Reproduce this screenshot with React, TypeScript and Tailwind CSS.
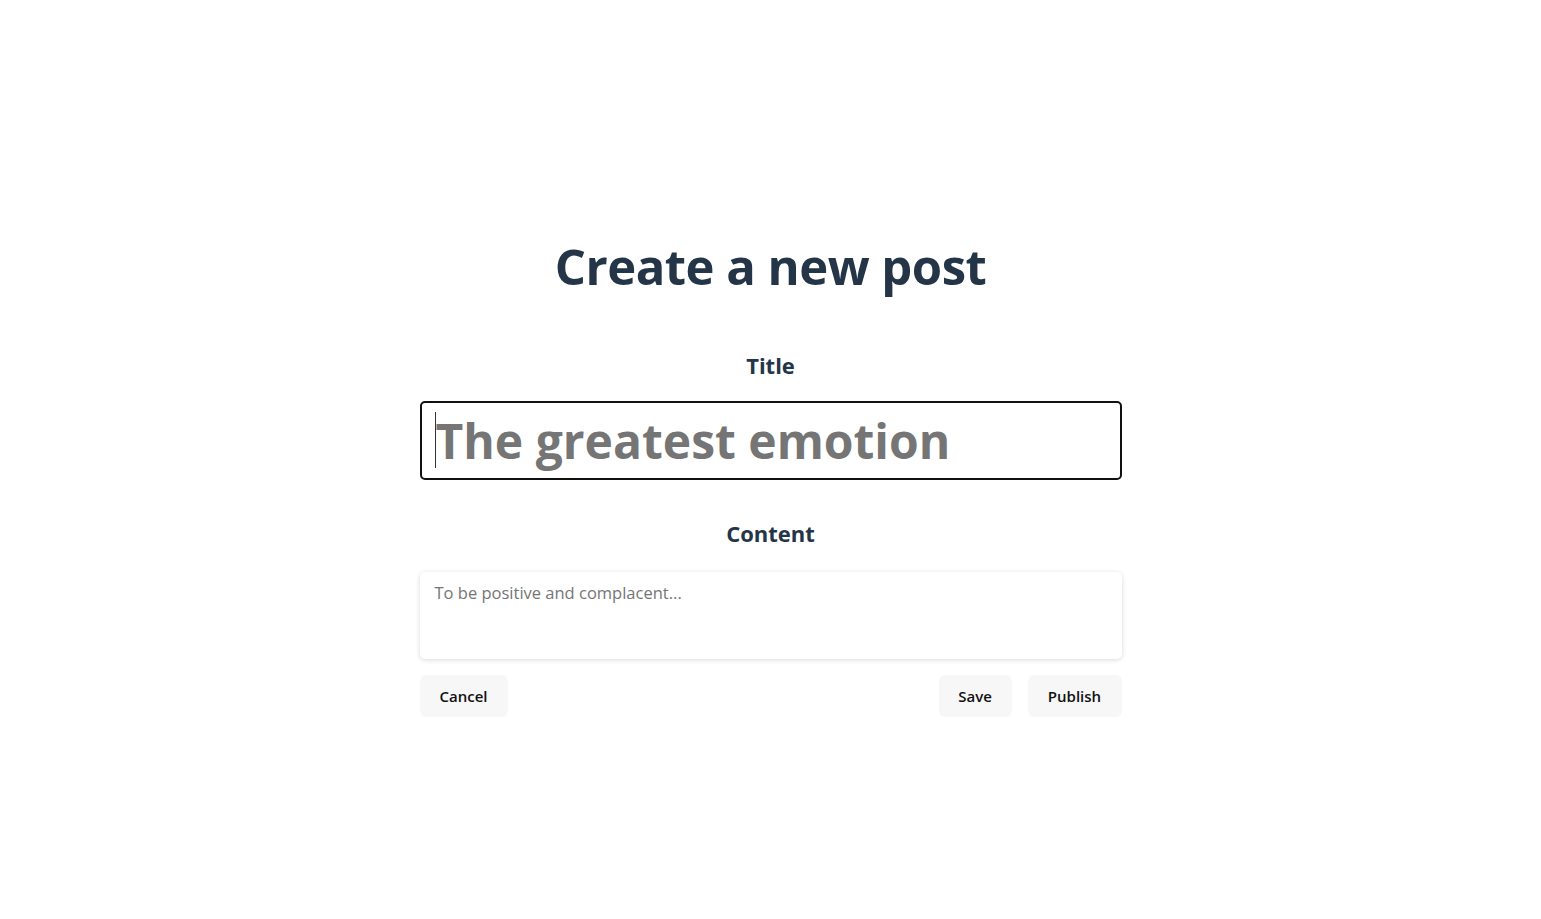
import { useState } from 'react';

const font = { fontFamily: '"Open Sans", "Noto Sans", sans-serif' };

export default function App() {
  const [title, setTitle] = useState('');
  const [content, setContent] = useState('');

  return (
    <div className="min-h-screen bg-white flex justify-center" style={font}>
      <div className="w-[702px] pt-[230px] flex flex-col">
        <h1 className="text-center text-[49px] leading-[72px] font-bold text-[#233547] tracking-[-0.5px]">
          Create a new post
        </h1>

        <label htmlFor="title" className="mt-[48px] text-center text-[22px] leading-[30px] font-bold text-[#233547]">
          Title
        </label>
        <div className="relative mt-[21px]">
          <input
            id="title"
            value={title}
            onChange={(e) => setTitle(e.target.value)}
            placeholder="The greatest emotion"
            className="h-[79px] w-full rounded-[5px] border-2 border-[#111] px-[14px] text-[48px] font-bold text-[#333] placeholder:text-[#757575] outline-none caret-[#222]"
          />
          {title === '' && (
            <span className="pointer-events-none absolute left-[15px] top-[11px] h-[56px] w-px bg-[#333]" />
          )}
        </div>

        <label htmlFor="content" className="mt-[38px] text-center text-[22px] leading-[30px] font-bold text-[#233547]">
          Content
        </label>
        <textarea
          id="content"
          value={content}
          onChange={(e) => setContent(e.target.value)}
          placeholder="To be positive and complacent..."
          className="mt-[24px] h-[87px] w-full resize-none rounded-[5px] bg-white px-[15px] py-[9px] text-[16.5px] leading-[24px] text-[#333] placeholder:text-[#757575] outline-none shadow-[0_1px_5px_rgba(0,0,0,0.15)]"
        />

        <div className="mt-[16px] flex items-center">
          <button className="h-[42px] w-[88px] rounded-[6px] bg-[#f7f7f7] text-[15px] font-semibold text-[#111]">
            Cancel
          </button>
          <div className="ml-auto flex gap-[16px]">
            <button className="h-[42px] w-[73px] rounded-[6px] bg-[#f7f7f7] text-[15px] font-semibold text-[#111]">
              Save
            </button>
            <button className="h-[42px] w-[94px] rounded-[6px] bg-[#f7f7f7] text-[15px] font-semibold text-[#111]">
              Publish
            </button>
          </div>
        </div>
      </div>
    </div>
  );
}
